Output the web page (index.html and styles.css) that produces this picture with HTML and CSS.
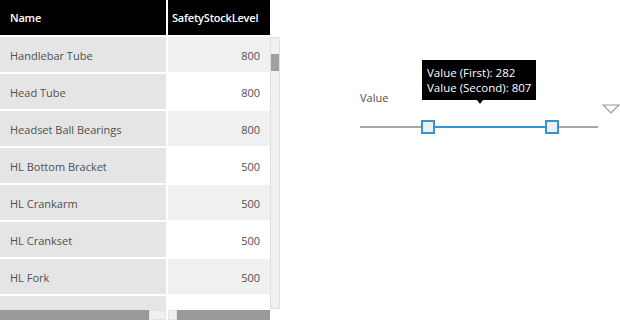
FILE: index.html
```html
<!DOCTYPE html>
<html lang="en">
<head>
  <meta charset="UTF-8" />
  <title>Products - Safety Stock</title>
  <link rel="stylesheet" href="styles.css">
</head>
<body>
  <div class="grid">
    <div class="grid-body">
      <div class="row head">
        <div class="cell name">Name</div>
        <div class="cell num">SafetyStockLevel</div>
      </div>
      <div class="rows">
        <div class="row"><div class="cell name">Handlebar Tube</div><div class="cell num alt">800</div></div>
        <div class="row"><div class="cell name">Head Tube</div><div class="cell num">800</div></div>
        <div class="row"><div class="cell name">Headset Ball Bearings</div><div class="cell num alt">800</div></div>
        <div class="row"><div class="cell name">HL Bottom Bracket</div><div class="cell num">500</div></div>
        <div class="row"><div class="cell name">HL Crankarm</div><div class="cell num alt">500</div></div>
        <div class="row"><div class="cell name">HL Crankset</div><div class="cell num">500</div></div>
        <div class="row"><div class="cell name">HL Fork</div><div class="cell num alt">500</div></div>
        <div class="row"><div class="cell name"></div><div class="cell num"></div></div>
      </div>
      <div class="vscroll"><div class="vthumb"></div></div>
    </div>
    <div class="hscrolls">
      <div class="hscroll first"><div class="hthumb"></div><div class="htrack"></div></div>
      <div class="hscroll second"><div class="htrack"></div><div class="hthumb"></div></div>
    </div>
  </div>

  <div class="slicer">
    <div class="slicer-top">
      <span class="slicer-label">Value</span>
      <svg class="slicer-toggle" width="18" height="10" viewBox="0 0 18 10">
        <polygon points="1,1 17,1 9,9" fill="none" stroke="#9a9a9a" stroke-width="1.2" />
      </svg>
    </div>
    <div class="track">
      <div class="track-line"></div>
      <div class="track-range" style="left: 68px; width: 118px;"></div>
      <div class="handle" style="left: 61px;"></div>
      <div class="handle" style="left: 185px;"></div>
      <div class="tip">
        Value (First): 282<br>
        Value (Second): 807
      </div>
    </div>
  </div>
</body>
</html>
```

FILE: styles.css
```css
* { box-sizing: border-box; }
body {
  margin: 0;
  font-family: 'Open Sans', 'Noto Sans', sans-serif;
  font-size: 11px;
  color: #505050;
  background: #fff;
  display: flex;
  align-items: flex-start;
}
.grid {
  width: 280px;
  height: 320px;
  display: flex;
  flex-direction: column;
}
.grid-body {
  height: 310px;
  flex: none;
  position: relative;
  overflow: hidden;
}
.row {
  display: flex;
  gap: 2px;
  height: 35px;
  flex: none;
  width: 270px;
}
.rows {
  width: 270px;
  display: flex;
  flex-direction: column;
  gap: 2px;
  margin-top: 2px;
}
.cell {
  display: flex;
  align-items: center;
  padding: 2px 10px 0;
}
.cell.name {
  width: 166px;
  background: #e5e5e5;
}
.cell.num {
  width: 102px;
  justify-content: flex-end;
  background: #fff;
}
.cell.num.alt {
  background: #f0f0f0;
}
.head .cell {
  background: #000;
  color: #fff;
  font-weight: 600;
  letter-spacing: -0.2px;
  height: 35px;
  padding-top: 0;
}
.head .cell.num {
  justify-content: flex-start;
  padding: 0 4px;
  background: #000;
}
.vscroll {
  position: absolute;
  left: 270px;
  top: 37px;
  width: 10px;
  bottom: 1px;
  background: #f0f0f0;
  border: 1px solid #e0e0e0;
}
.vthumb {
  margin-top: 16px;
  height: 17px;
  background: #a0a0a0;
}
.hscrolls {
  height: 10px;
  flex: none;
  display: flex;
  gap: 2px;
}
.hscroll {
  display: flex;
  height: 10px;
}
.hscroll.first { width: 166px; }
.hscroll.second { width: 102px; }
.hthumb {
  background: #999;
  flex: 1;
}
.htrack {
  background: #f0f0f0;
  border: 1px solid #e2e2e2;
}
.first .htrack { width: 17px; }
.second .htrack { width: 9px; }

.slicer {
  margin-left: 80px;
  margin-top: 89px;
  width: 260px;
}
.slicer-top {
  display: flex;
  justify-content: space-between;
  align-items: flex-start;
  height: 31px;
}
.slicer-label {
  line-height: 18px;
}
.slicer-toggle {
  margin-top: 15px;
}
.track {
  position: relative;
  width: 238px;
  height: 14px;
}
.track-line {
  position: absolute;
  left: 0;
  right: 0;
  top: 6px;
  height: 2px;
  background: #a6a6a6;
}
.track-range {
  position: absolute;
  top: 6px;
  height: 2px;
  background: #2f95d3;
}
.handle {
  position: absolute;
  top: 0;
  width: 14px;
  height: 14px;
  background: #f0f0f0;
  border: 2px solid #2f95d3;
}
.tip {
  position: absolute;
  left: 62px;
  top: -60px;
  width: 114px;
  background: #000;
  color: #fff;
  padding: 5px 5px 5px 5px;
  font-size: 11.5px;
  line-height: 15px;
  white-space: nowrap;
}
.tip::after {
  content: "";
  position: absolute;
  left: 55px;
  bottom: -4px;
  border-left: 3px solid transparent;
  border-right: 3px solid transparent;
  border-top: 4px solid #000;
}
```
